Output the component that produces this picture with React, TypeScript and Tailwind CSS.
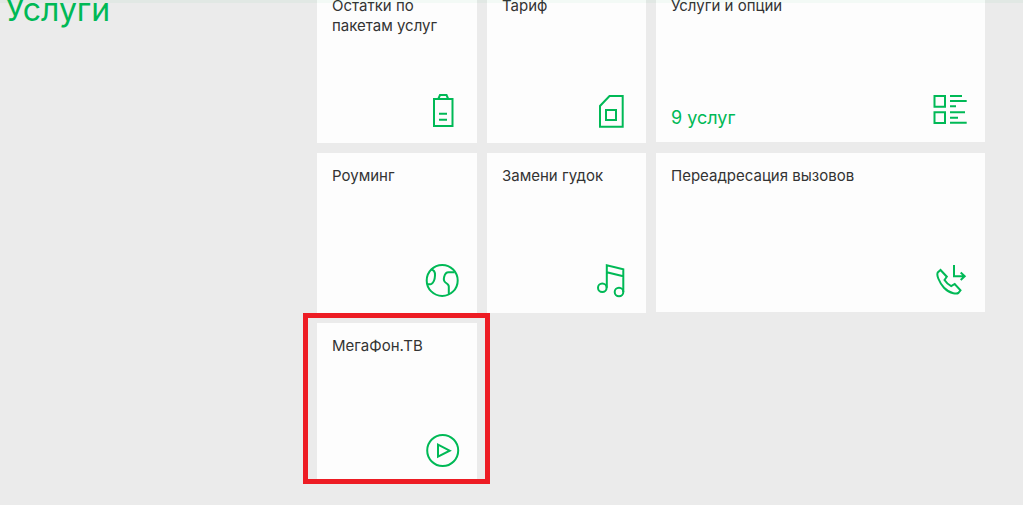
import type { ReactNode } from 'react';

type Service = {
  id: number;
  name: string;
  note?: string;
  wide?: boolean;
  highlighted?: boolean;
  icon: ReactNode;
};

const services: Service[] = [
  {
    id: 1,
    name: 'Остатки по пакетам услуг',
    icon: (
      <>
        <path d="M9 6h18.500v27H9z" />
        <path d="M13.300 6l1.700-4h6.500l1.700 4M14 20.700h8M14 26.700h8" />
      </>
    ),
  },
  {
    id: 2,
    name: 'Тариф',
    icon: (
      <>
        <path d="M15.500 3h13.200v30.700H6V13z" />
        <path d="M12 17h10v10H12z" />
      </>
    ),
  },
  {
    id: 3,
    name: 'Услуги и опции',
    note: '9 услуг',
    wide: true,
    icon: (
      <>
        <path d="M1.500 4H12v10.700H1.500zM1.500 20.300H12V31H1.500z" />
        <path d="M17 4h12M17 9h16.700M17 14.300h6M17 20.300h15M17 25.700h8M17 30.700h16.700" />
      </>
    ),
  },
  {
    id: 4,
    name: 'Роуминг',
    icon: (
      <>
        <circle cx="17.200" cy="17.400" r="15.500" />
        <path d="M6 6.500c3 .3 4.200 2.500 4 6-.2 4-1.500 7.200-3.500 8.300-1 .5-2.300.6-3.800.4" />
        <path d="M29.500 9.300h-6c-2.500 0-3.600 1.700-4.300 4.500-.8 3-.5 4.500 1.300 5.700 2 1.200 3.300 2 3.300 4v8" />
      </>
    ),
  },
  {
    id: 5,
    name: 'Замени гудок',
    icon: (
      <>
        <circle cx="8.300" cy="24.700" r="4.300" />
        <circle cx="25" cy="29" r="4.300" />
        <path d="M12.800 24.700V2.200l16.500 4V29M12.800 9.300l16.500 4" />
      </>
    ),
  },
  {
    id: 6,
    name: 'Переадресация вызовов',
    wide: true,
    icon: (
      <>
        <path d="M7.500 8L5 10.200c-1 1.300-.5 4.300.3 6.300 1.200 3 3 6.300 5.700 9.200 2.700 2.800 6.300 4.800 9.300 5.500 2 .5 4.200.5 5.200-.3l2-2.600-5.800-6.300-3.500 2.200c-2.700-1.400-5-3.600-6.700-6.200l2.300-3.300z" />
        <path d="M21 3v11.300h11M27.700 10.600l4 3.700-4 3.700" />
      </>
    ),
  },
  {
    id: 7,
    name: 'МегаФон.ТВ',
    highlighted: true,
    icon: (
      <>
        <circle cx="17.700" cy="17.500" r="15.500" />
        <path d="M13 11.700l11.700 6-11.700 6z" />
      </>
    ),
  },
];

function ServiceCard({ service }: { service: Service }) {
  return (
    <a
      href="#"
      className={`relative flex flex-col justify-between bg-[#fdfdfd] pt-[13px] pr-4 pb-[14px] pl-[15px] ${
        service.wide ? 'h-[159px]' : 'h-[160px]'
      }`}
    >
      <h2 className="max-w-[240px] text-[15px] leading-5 text-[#333333]">{service.name}</h2>
      <div className="flex items-end justify-between">
        <span className="text-lg leading-5 text-[#00b956]">{service.note}</span>
        <svg
          className="h-9 w-9 shrink-0"
          viewBox="0 0 36 36"
          fill="none"
          stroke="#00b956"
          strokeWidth="2"
          aria-hidden="true"
        >
          {service.icon}
        </svg>
      </div>
      {service.highlighted && (
        <div className="pointer-events-none absolute -top-[10px] -right-[13px] -bottom-px -left-[14px] border-5 border-[#ed1c24]" />
      )}
    </a>
  );
}

export default function App() {
  return (
    <div className="relative min-h-screen overflow-hidden bg-[#ebebeb] font-['Inter','Liberation_Sans',sans-serif]">
      <main className="-mt-[17px] flex pr-[38px]">
        <h1 className="w-[317px] shrink-0 pt-[7px] pl-[5px] text-[32px] leading-10 text-[#00b956]">Услуги</h1>
        <div className="grid flex-1 grid-cols-[160fr_159fr_329fr] items-start gap-[10px]">
          {services.map((service) => (
            <ServiceCard key={service.id} service={service} />
          ))}
        </div>
      </main>

      {/* Bottom edge of the sticky header */}
      <div className="absolute inset-x-0 top-0 h-[3px] bg-[#00b956]/4" />
    </div>
  );
}
